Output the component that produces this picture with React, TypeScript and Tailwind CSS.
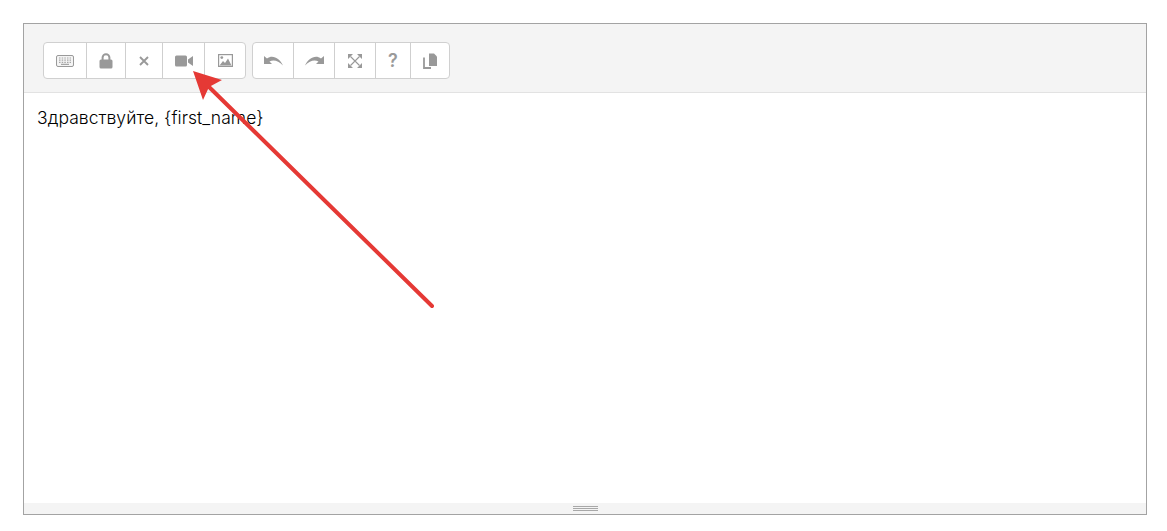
const groupOne = [
  { width: "w-[43px]", icon: <KeyboardIcon /> },
  { width: "w-[39px]", icon: <LockIcon /> },
  { width: "w-[37px]", icon: <CloseIcon /> },
  { width: "w-[42px]", icon: <VideoIcon /> },
  { width: "w-[40px]", icon: <ImageIcon /> },
];

const groupTwo = [
  { width: "w-[41px]", icon: <UndoIcon /> },
  { width: "w-[41px]", icon: <RedoIcon /> },
  { width: "w-[41px]", icon: <ExpandIcon /> },
  { width: "w-[35px]", icon: <span className="text-[18px] font-semibold leading-none text-[#9a9a9a]">?</span> },
  { width: "w-[38px]", icon: <CopyIcon /> },
];

function KeyboardIcon() {
  return (
    <svg width="18" height="12" viewBox="0 0 18 12">
      <rect x="0.5" y="0.5" width="17" height="11" rx="1.5" fill="#f4f4f4" stroke="#9a9a9a" />
      <path
        d="M3 3h1.5M5.700 3h1.500M8.300 3h1.500M11 3h1.500M13.600 3H15M3 5.200h1.500M5.700 5.200h1.500M8.300 5.200h1.500M11 5.200h1.500M13.600 5.200H15M3 7.400h1.500M5.700 7.400h1.500M8.300 7.400h1.500M11 7.400h1.500M13.600 7.400H15M5 9.400h8"
        stroke="#a6a6a6"
        strokeWidth="1.2"
        fill="none"
      />
    </svg>
  );
}

function LockIcon() {
  return (
    <svg width="14" height="16" viewBox="0 0 14 16">
      <path d="M3.600 7V4.600a3.400 3.400 0 0 1 6.800 0V7" fill="none" stroke="#999" strokeWidth="2" />
      <rect x="0.5" y="6.500" width="13" height="9" rx="1.500" fill="#999" />
    </svg>
  );
}

function CloseIcon() {
  return (
    <svg width="10" height="10" viewBox="0 0 10 10">
      <path d="M1 1l8 8M9 1l-8 8" stroke="#999" strokeWidth="1.900" fill="none" />
    </svg>
  );
}

function VideoIcon() {
  return (
    <svg width="18" height="12" viewBox="0 0 18 12">
      <rect x="0" y="0.5" width="12" height="11" rx="1.500" fill="#999" />
      <path d="M13 4.600L18 1v10l-5-3.600z" fill="#999" />
    </svg>
  );
}

function ImageIcon() {
  return (
    <svg width="15" height="13" viewBox="0 0 15 13">
      <rect x="0.6" y="0.6" width="13.800" height="11.800" fill="#fff" stroke="#999" strokeWidth="1.200" />
      <circle cx="3.800" cy="3.600" r="1.400" fill="#999" />
      <path d="M1.500 11.500L5 7l2 2 3-4.500 3.500 7z" fill="#999" />
    </svg>
  );
}

function UndoIcon() {
  return (
    <svg width="19" height="10" viewBox="0 0 19 10">
      <path d="M0 0v8h8L5.500 5.500C9 3.500 14 4 19 9.500 16 3 9-2 3 2.500z" fill="#999" />
    </svg>
  );
}

function RedoIcon() {
  return (
    <svg width="19" height="10" viewBox="0 0 19 10">
      <path d="M19 0v8h-8l2.500-2.500C10 3.500 5 4 0 9.500 3 3 10-2 16 2.500z" fill="#999" />
    </svg>
  );
}

function ExpandIcon() {
  return (
    <svg width="14" height="14" viewBox="0 0 14 14">
      <path d="M0 0h5L0 5zM14 0v5L9 0zM0 14V9l5 5zM14 14H9l5-5z" fill="#999" />
      <path d="M2.500 2.500l9 9M11.500 2.500l-9 9" stroke="#999" strokeWidth="1.100" fill="none" />
    </svg>
  );
}

function CopyIcon() {
  return (
    <svg width="14" height="16" viewBox="0 0 14 16">
      <path d="M1 4.500V15H8" fill="none" stroke="#999" strokeWidth="1.800" />
      <path d="M6 0.500h5l3 3V13H6z" fill="#999" />
    </svg>
  );
}

function ButtonGroup({ buttons }: { buttons: typeof groupOne }) {
  return (
    <div className="flex h-[37px] rounded-[4px] border border-[#d0d0d0] bg-white">
      {buttons.map((button, i) => (
        <button
          key={i}
          type="button"
          className={`flex items-center justify-center border-r border-[#cfcfcf] last:border-r-0 ${button.width}`}
        >
          {button.icon}
        </button>
      ))}
    </div>
  );
}

export default function App() {
  return (
    <div className="relative h-[531px] w-[1167px] bg-white p-[23px] font-['Inter',sans-serif]">
      <div className="flex h-[492px] w-[1124px] flex-col border border-[#a3a3a3]">
        <div className="flex h-[69px] shrink-0 gap-[6px] border-b border-[#e2e2e2] bg-[#f4f4f4] pl-[19px] pt-[18px]">
          <ButtonGroup buttons={groupOne} />
          <ButtonGroup buttons={groupTwo} />
        </div>
        <div className="flex-1 px-[13px] pt-[15px] text-[17.500px] font-light leading-[20px] tracking-[0.05px] text-black">
          Здравствуйте, {"{first_name}"}
        </div>
        <div className="flex h-[11px] shrink-0 items-center justify-center bg-[#f4f4f4]">
          <div className="h-[5px] w-[25px] border-y border-[#a8a8a8] bg-[linear-gradient(#f4f4f4_0_1px,#a8a8a8_1px_2px,#f4f4f4_2px)]" />
        </div>
      </div>
      <svg className="absolute left-0 top-0" width="1167" height="531" viewBox="0 0 1167 531">
        <path d="M432 306L206 84" stroke="#e53935" strokeWidth="4" fill="none" strokeLinecap="round" />
        <path d="M193 71L203 100L209 87L222 80z" fill="#e53935" />
      </svg>
    </div>
  );
}
